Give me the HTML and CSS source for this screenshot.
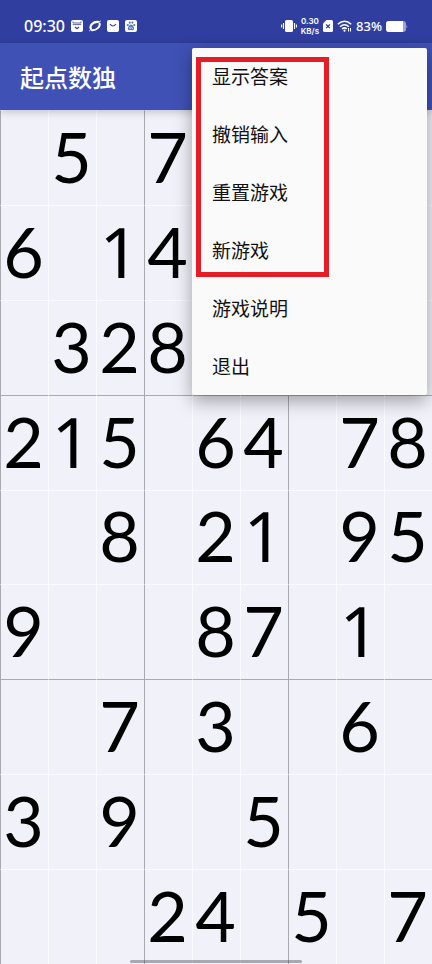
FILE: index.html
```
<!DOCTYPE html>
<html lang="zh-CN">
<head>
  <meta charset="utf-8">
  <meta name="viewport" content="width=device-width, initial-scale=1">
  <title>起点数独</title>
  <link rel="stylesheet" href="styles.css">
</head>
<body>
  <div class="status-bar">
    <div class="status-group">
      <span class="clock">09:30</span>
      <svg class="icon" viewBox="0 0 12 12">
        <rect width="12" height="12" rx="2" fill="#fff"/>
        <path d="M2 1.500V3H10V1.500M1.800 4.600h8.400" fill="none" stroke="#303f9f" stroke-width=".8"/>
        <path d="M4 7l2 1.800L8 7" fill="none" stroke="#303f9f" stroke-width="1.200"/>
      </svg>
      <svg class="icon" viewBox="0 0 12 12">
        <path d="M1.800 8.500C.5 5.500 4 1.500 9 1.800" fill="none" stroke="#fff" stroke-width="2.200" stroke-linecap="round"/>
        <path d="M10.600 3.600C11.500 6.500 7.500 10.500 3 10.300" fill="none" stroke="#fff" stroke-width="2" stroke-linecap="round"/>
        <path d="M.3 11L3 8.500M9.500 2.500L11.800 .8" stroke="#fff" stroke-width="1"/>
      </svg>
      <svg class="icon" viewBox="0 0 12 12">
        <rect width="12" height="12" rx="2" fill="#fff"/>
        <path d="M3 4Q6 8 9 4" fill="none" stroke="#303f9f" stroke-width="1.200"/>
      </svg>
      <svg class="icon" viewBox="0 0 12 12">
        <rect width="12" height="12" rx="2" fill="#fff"/>
        <g fill="#4a78c0">
          <circle cx="2.800" cy="5" r="1.100"/>
          <circle cx="4.800" cy="2.600" r="1.100"/>
          <circle cx="7.400" cy="2.600" r="1.100"/>
          <circle cx="9.300" cy="5" r="1.100"/>
          <path d="M6 4.600C7.400 4.600 9.600 7.600 9 9.200S7 10 6 10 3.500 10.600 3 9.200 4.600 4.600 6 4.600Z"/>
        </g>
        <path d="M4.600 7v1.500h1.200V6.500M6.900 7v1.600h1.200" fill="none" stroke="#fff" stroke-width=".5"/>
      </svg>
    </div>
    <div class="status-group status-right">
      <svg class="icon icon-vibrate" viewBox="0 0 16 14">
        <rect x="4" y="1" width="8" height="12" rx="1.500" fill="#fff"/>
        <path d="M2.500 4v6M13.500 4v6M.6 5.500v3M15.400 5.500v3" stroke="#fff" stroke-width="1.100"/>
      </svg>
      <div class="speed">
        <span>0.30</span>
        <span>KB/s</span>
      </div>
      <svg class="icon icon-sim" viewBox="0 0 10 12">
        <path d="M3.500 0H8.500Q10 0 10 1.500V10.500Q10 12 8.500 12H1.500Q0 12 0 10.500V3.500Z" fill="#fff"/>
        <path d="M3.200 4.500l3.600 3.600M6.800 4.500L3.200 8.100" stroke="#303f9f" stroke-width="1.300"/>
      </svg>
      <svg class="icon icon-wifi" viewBox="0 0 15 12">
        <path d="M.8 4.300Q7.500-1.700 14.200 4.300M3 6.700Q7.500 2.700 12 6.700M5 9Q7.500 6.800 9.800 8.800" fill="none" stroke="#fff" stroke-width="1.500"/>
        <circle cx="7.500" cy="10.700" r="1.100" fill="#fff"/>
        <path d="M11.500 8v3.500M13.500 8v3.500" stroke="#fff" stroke-width="1"/>
      </svg>
      <span class="battery-level">83%</span>
      <svg class="icon icon-battery" viewBox="0 0 22 11">
        <rect width="20" height="11" rx="3" fill="#9aa3d6"/>
        <path d="M3 0H17V11H3Q0 11 0 8V3Q0 0 3 0Z" fill="#fff"/>
        <path d="M20.500 3.500Q22 5.500 20.500 7.500Z" fill="#9aa3d6"/>
      </svg>
    </div>
  </div>

  <header class="app-bar">
    <h1>起点数独</h1>
  </header>

  <table class="board">
    <tr><td></td><td>5</td><td></td><td>7</td><td></td><td></td><td></td><td></td><td></td></tr>
    <tr><td>6</td><td></td><td class="one">1</td><td>4</td><td></td><td></td><td></td><td></td><td></td></tr>
    <tr><td></td><td>3</td><td>2</td><td>8</td><td></td><td></td><td></td><td></td><td></td></tr>
    <tr><td>2</td><td class="one">1</td><td>5</td><td></td><td>6</td><td>4</td><td></td><td>7</td><td>8</td></tr>
    <tr><td></td><td></td><td>8</td><td></td><td>2</td><td class="one">1</td><td></td><td>9</td><td>5</td></tr>
    <tr><td>9</td><td></td><td></td><td></td><td>8</td><td>7</td><td></td><td class="one">1</td><td></td></tr>
    <tr><td></td><td></td><td>7</td><td></td><td>3</td><td></td><td></td><td>6</td><td></td></tr>
    <tr><td>3</td><td></td><td>9</td><td></td><td></td><td>5</td><td></td><td></td><td></td></tr>
    <tr><td></td><td></td><td></td><td>2</td><td>4</td><td></td><td>5</td><td></td><td>7</td></tr>
  </table>

  <div class="menu">
    <button class="menu-item">显示答案</button>
    <button class="menu-item">撤销输入</button>
    <button class="menu-item">重置游戏</button>
    <button class="menu-item">新游戏</button>
    <button class="menu-item">游戏说明</button>
    <button class="menu-item">退出</button>
    <div class="highlight"></div>
  </div>

  <div class="gesture-bar"></div>
</body>
</html>
```

FILE: styles.css
```
* {
  box-sizing: border-box;
}

body {
  position: relative;
  display: flex;
  flex-direction: column;
  min-height: 100vh;
  margin: 0;
  font-family: "Noto Sans", "Noto Sans CJK SC", sans-serif;
  background: #f1f1fa;
  color: #000;
}

/* system status bar */
.status-bar {
  display: flex;
  justify-content: space-between;
  align-items: center;
  height: 43px;
  padding: 9px 24px 0 24px;
  background: #303f9f;
  color: #fff;
}

.status-group {
  display: flex;
  align-items: center;
  gap: 6px;
}

.status-right {
  gap: 4px;
}

.clock {
  font-size: 16px;
  font-weight: 500;
  line-height: 20px;
}

.speed {
  display: flex;
  flex-direction: column;
  font-family: Inter, sans-serif;
  font-size: 8px;
  font-weight: 600;
  line-height: 10px;
  text-align: center;
}

.battery-level {
  font-size: 13px;
  font-weight: 500;
  line-height: 20px;
}

.icon {
  display: block;
  width: 12px;
  height: 12px;
}

.icon-vibrate {
  width: 16px;
  height: 14px;
}

.icon-sim {
  width: 10px;
}

.icon-wifi {
  width: 15px;
}

.icon-battery {
  width: 22px;
  height: 11px;
}

/* title */
.app-bar {
  position: relative;
  display: flex;
  align-items: center;
  height: 67px;
  padding: 2px 20px 0;
  background: #3f51b5;
  box-shadow: 0 2px 8px rgba(0, 0, 0, 0.2);
  color: #fff;
}

.app-bar h1 {
  margin: 0;
  font-size: 24px;
  font-weight: 500;
  line-height: 32px;
}

/* board */
.board {
  flex: 1;
  width: 100%;
  table-layout: fixed;
  border-spacing: 0;
}

.board td {
  padding: 0 2px 4px 0;
  border-left: 1px solid #fafaff;
  border-top: 1px solid #fafaff;
  font-family: Lato, sans-serif;
  font-size: 70px;
  line-height: 80px;
  text-align: center;
}

/* plain 1 without the foot */
.board .one {
  font-family: "Noto Sans", sans-serif;
}

.board td:nth-child(3n + 1) {
  border-left-color: #a9a9b0;
}

.board tr:nth-child(3n + 1) td {
  border-top-color: #a9a9b0;
}

.board tr:first-child td {
  border-top-color: transparent;
}

/* overflow menu */
.menu {
  position: absolute;
  top: 48px;
  right: 5px;
  display: flex;
  flex-direction: column;
  gap: 1px;
  width: 235px;
  background: #fafafa;
  border-radius: 2px;
  box-shadow: 0 6px 18px rgba(0, 0, 0, 0.35);
}

.menu-item {
  height: 57px;
  padding: 0 20px;
  border: none;
  background: none;
  color: #111;
  font-family: inherit;
  font-size: 19px;
  line-height: 28px;
  text-align: left;
  cursor: pointer;
}

.highlight {
  position: absolute;
  top: 9px;
  left: 4px;
  width: 133px;
  height: 220px;
  border: 5px solid #e51d26;
  pointer-events: none;
}

.gesture-bar {
  position: absolute;
  bottom: 1px;
  left: 30%;
  width: 40%;
  height: 3px;
  border-radius: 2px;
  background: rgba(60, 60, 70, 0.4);
}
```
